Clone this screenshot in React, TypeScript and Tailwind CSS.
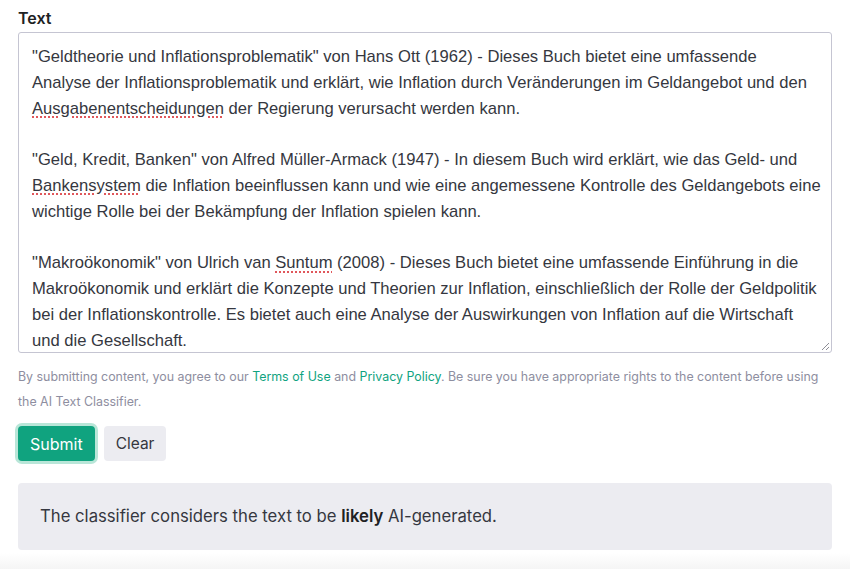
import React from "react";

const Sp = ({ children }: { children: React.ReactNode }) => (
  <span className="underline decoration-dotted decoration-[#e0575b] decoration-[1.5px] underline-offset-[3px]">
    {children}
  </span>
);

export default function App() {
  const line = "block whitespace-nowrap h-[25.8px]";
  return (
    <div className="w-[850px] h-[569px] bg-white overflow-hidden flex flex-col relative">
      <div className="px-[18px] pt-[8px] flex flex-col">
        <div className="text-[16px] font-semibold text-[#202123] leading-[20px] mb-[4px]" style={{ fontFamily: "Inter, sans-serif" }}>
          Text
        </div>
        <div
          className="relative h-[321px] border border-[#c5c5d2] rounded-[3px] pl-[13px] pt-[11px] overflow-hidden text-[16.6px] leading-[25.8px] text-[#353740]"
          style={{ fontFamily: "'Liberation Sans', Arial, sans-serif" }}
        >
          <span className={line}>"Geldtheorie und Inflationsproblematik" von Hans Ott (1962) - Dieses Buch bietet eine umfassende</span>
          <span className={line}>Analyse der Inflationsproblematik und erklärt, wie Inflation durch Veränderungen im Geldangebot und den</span>
          <span className={line}><Sp>Ausgabenentscheidungen</Sp> der Regierung verursacht werden kann.</span>
          <span className={line}></span>
          <span className={line}>"Geld, Kredit, Banken" von Alfred Müller-Armack (1947) - In diesem Buch wird erklärt, wie das Geld- und</span>
          <span className={line}><Sp>Bankensystem</Sp> die Inflation beeinflussen kann und wie eine angemessene Kontrolle des Geldangebots eine</span>
          <span className={line}>wichtige Rolle bei der Bekämpfung der Inflation spielen kann.</span>
          <span className={line}></span>
          <span className={line}>"Makroökonomik" von Ulrich van <Sp>Suntum</Sp> (2008) - Dieses Buch bietet eine umfassende Einführung in die</span>
          <span className={line}>Makroökonomik und erklärt die Konzepte und Theorien zur Inflation, einschließlich der Rolle der Geldpolitik</span>
          <span className={line}>bei der Inflationskontrolle. Es bietet auch eine Analyse der Auswirkungen von Inflation auf die Wirtschaft</span>
          <span className={line}>und die Gesellschaft.</span>
          <svg className="absolute right-[1px] bottom-[1px]" width="9" height="9" viewBox="0 0 9 9">
            <line x1="1" y1="8" x2="8" y2="1" stroke="#8e8e96" strokeWidth="1" />
            <line x1="5" y1="8" x2="8" y2="5" stroke="#8e8e96" strokeWidth="1" />
          </svg>
        </div>
        <div
          className="mt-[11px] text-[12.4px] leading-[25px] text-[#8e8ea0]"
          style={{ fontFamily: "Inter, sans-serif" }}
        >
          <span className="block whitespace-nowrap">
            By submitting content, you agree to our <span className="text-[#10a37f]">Terms of Use</span> and{" "}
            <span className="text-[#10a37f]">Privacy Policy</span>. Be sure you have appropriate rights to the content before using
          </span>
          <span className="block whitespace-nowrap">the AI Text Classifier.</span>
        </div>
        <div className="flex gap-[9px] mt-[12px]" style={{ fontFamily: "Inter, sans-serif" }}>
          <button className="h-[35px] px-[12px] rounded-[4px] bg-[#10a37f] text-white text-[16px] ring-[3px] ring-[#b9e6d8]">
            Submit
          </button>
          <button className="h-[35px] px-[12px] rounded-[4px] bg-[#ececf1] text-[#353740] text-[15.5px]">
            Clear
          </button>
        </div>
        <div
          className="mt-[22px] h-[67px] rounded-[4px] bg-[#ececf1] flex items-center pl-[22px] text-[16.7px] text-[#353740]"
          style={{ fontFamily: "Inter, sans-serif" }}
        >
          <span>
            The classifier considers the text to be <b className="font-semibold text-[#202123]">likely</b> AI-generated.
          </span>
        </div>
      </div>
      <div className="absolute left-0 right-0 bottom-0 h-[16px] bg-gradient-to-b from-white to-[#f5f5f5]" />
    </div>
  );
}
